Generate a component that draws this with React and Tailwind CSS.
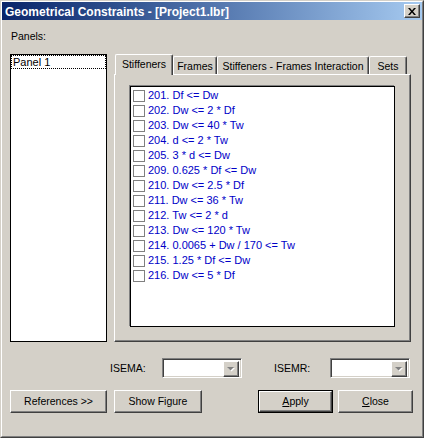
import React from "react";

const raised =
  "border border-t-white border-l-white border-r-[#404040] border-b-[#404040] shadow-[inset_-1px_-1px_0_#808080]";
const sunken =
  "border border-t-[#808080] border-l-[#808080] border-r-white border-b-white shadow-[inset_1px_1px_0_#404040,inset_-1px_-1px_0_#d4d0c8]";

const items = [
  "201. Df <= Dw",
  "202. Dw <= 2 * Df",
  "203. Dw <= 40 * Tw",
  "204. d <= 2 * Tw",
  "205. 3 * d <= Dw",
  "209. 0.625 * Df <= Dw",
  "210. Dw <= 2.5 * Df",
  "211. Dw <= 36 * Tw",
  "212. Tw <= 2 * d",
  "213. Dw <= 120 * Tw",
  "214. 0.0065 + Dw / 170 <= Tw",
  "215. 1.25 * Df <= Dw",
  "216. Dw <= 5 * Df",
];

function Arrow() {
  return (
    <svg width="8" height="5" viewBox="0 0 8 5" className="block">
      <path d="M1 1h7L4.5 4.5z" fill="#ffffff" />
      <path d="M0 0h7L3.5 3.5z" fill="#808080" />
    </svg>
  );
}

function Combo() {
  return (
    <div className={`w-[80px] h-[20px] bg-white flex justify-end p-[2px] ${sunken}`}>
      <div className={`w-[16px] h-[16px] bg-[#d4d0c8] flex items-center justify-center ${raised}`}>
        <Arrow />
      </div>
    </div>
  );
}

function Btn({ children, className = "" }) {
  return (
    <div
      className={`h-[23px] bg-[#d4d0c8] flex items-center justify-center text-[10.5px] leading-[13px] text-black ${raised} ${className}`}
    >
      {children}
    </div>
  );
}

export default function App() {
  return (
    <div className="w-[424px] h-[438px] bg-[#d4d0c8] border border-t-[#d4d0c8] border-l-[#d4d0c8] border-r-[#404040] border-b-[#404040] font-['Liberation_Sans',Arial,sans-serif] text-black">
      <div className="h-full border border-t-white border-l-white border-r-[#808080] border-b-[#808080] flex flex-col">
        {/* Title bar */}
        <div className="h-[18px] bg-linear-to-r from-[#0a246a] to-[#a6caf0] flex items-center justify-between pl-[3px] pr-[2px]">
          <span className="text-white font-bold text-[12px] leading-[18px] pt-[1px] whitespace-nowrap">
            Geometrical Constraints - [Project1.lbr]
          </span>
          <div className={`w-[16px] h-[14px] bg-[#d4d0c8] flex items-center justify-center ${raised}`}>
            <svg width="8" height="7" viewBox="0 0 8 7" className="block">
              <path d="M0 0h2l2 2.5L6 0h2L5 3.5 8 7H6L4 4.5 2 7H0l3-3.5z" fill="#000" />
            </svg>
          </div>
        </div>

        {/* Panels label */}
        <div className="mt-[10px] ml-[9px] h-[13px] text-[10.5px] leading-[13px]">Panels:</div>

        {/* Main row */}
        <div className="mt-[11px] ml-[8px] flex h-[288px]">
          <div className="w-[97px] h-full bg-white border border-black">
            <div className="h-[14px] border border-dotted border-black text-[11px] leading-[12px] pl-[1px]">
              Panel 1
            </div>
          </div>

          <div className="ml-[7px] w-[297px] h-full flex flex-col">
            <div className="h-[20px] flex items-end pl-[1px] text-[10.5px] leading-[13px]">
              <div className="w-[58px] h-[21px] -mb-[1px] relative z-10 bg-[#d4d0c8] border-l border-t border-r border-l-white border-t-white border-r-[#404040] shadow-[inset_-1px_0_0_#808080] rounded-t-[2px] flex justify-center pt-[3px]">
                Stiffeners
              </div>
              <div className="w-[44px] h-[18px] bg-[#d4d0c8] border-l border-t border-r border-l-white border-t-white border-r-[#404040] shadow-[inset_-1px_0_0_#808080] rounded-t-[2px] flex justify-center pt-[3px]">
                Frames
              </div>
              <div className="w-[152px] h-[18px] bg-[#d4d0c8] border-l border-t border-r border-l-white border-t-white border-r-[#404040] shadow-[inset_-1px_0_0_#808080] rounded-t-[2px] flex justify-center pt-[3px] whitespace-nowrap">
                Stiffeners - Frames Interaction
              </div>
              <div className="w-[38px] h-[18px] bg-[#d4d0c8] border-l border-t border-r border-l-white border-t-white border-r-[#404040] shadow-[inset_-1px_0_0_#808080] rounded-t-[2px] flex justify-center pt-[3px]">
                Sets
              </div>
            </div>
            <div className="flex-1 border border-t-white border-l-white border-r-[#404040] border-b-[#404040] shadow-[inset_-1px_-1px_0_#808080] pl-[15px] pt-[11px]">
              <div className="w-[265px] h-[241px] bg-white border border-black shadow-[-1px_-1px_0_#808080] pt-[1px] pl-[2px]">
                {items.map((t) => (
                  <div key={t} className="h-[15px] flex items-center">
                    <div className="w-[12px] h-[12px] border border-[#808080] bg-white shrink-0" />
                    <span className="ml-[3px] text-[11px] leading-[15px] text-[#0000c8] whitespace-nowrap">{t}</span>
                  </div>
                ))}
              </div>
            </div>
          </div>
        </div>

        {/* Combos row */}
        <div className="mt-[16px] h-[20px] flex items-center text-[10.5px] leading-[13px]">
          <span className="ml-[108px] w-[52px]">ISEMA:</span>
          <Combo />
          <span className="ml-[32px] w-[56px]">ISEMR:</span>
          <Combo />
        </div>

        {/* Buttons row */}
        <div className="mt-[12px] ml-[8px] flex">
          <Btn className="w-[97px]">References &gt;&gt;</Btn>
          <Btn className="w-[88px] ml-[7px]">Show Figure</Btn>
          <div className="ml-[56px] w-[75px] h-[23px] border border-black">
            <Btn className="w-full h-full">
              <span><span className="underline">A</span>pply</span>
            </Btn>
          </div>
          <Btn className="w-[75px] ml-[5px]">
            <span><span className="underline">C</span>lose</span>
          </Btn>
        </div>
      </div>
    </div>
  );
}
